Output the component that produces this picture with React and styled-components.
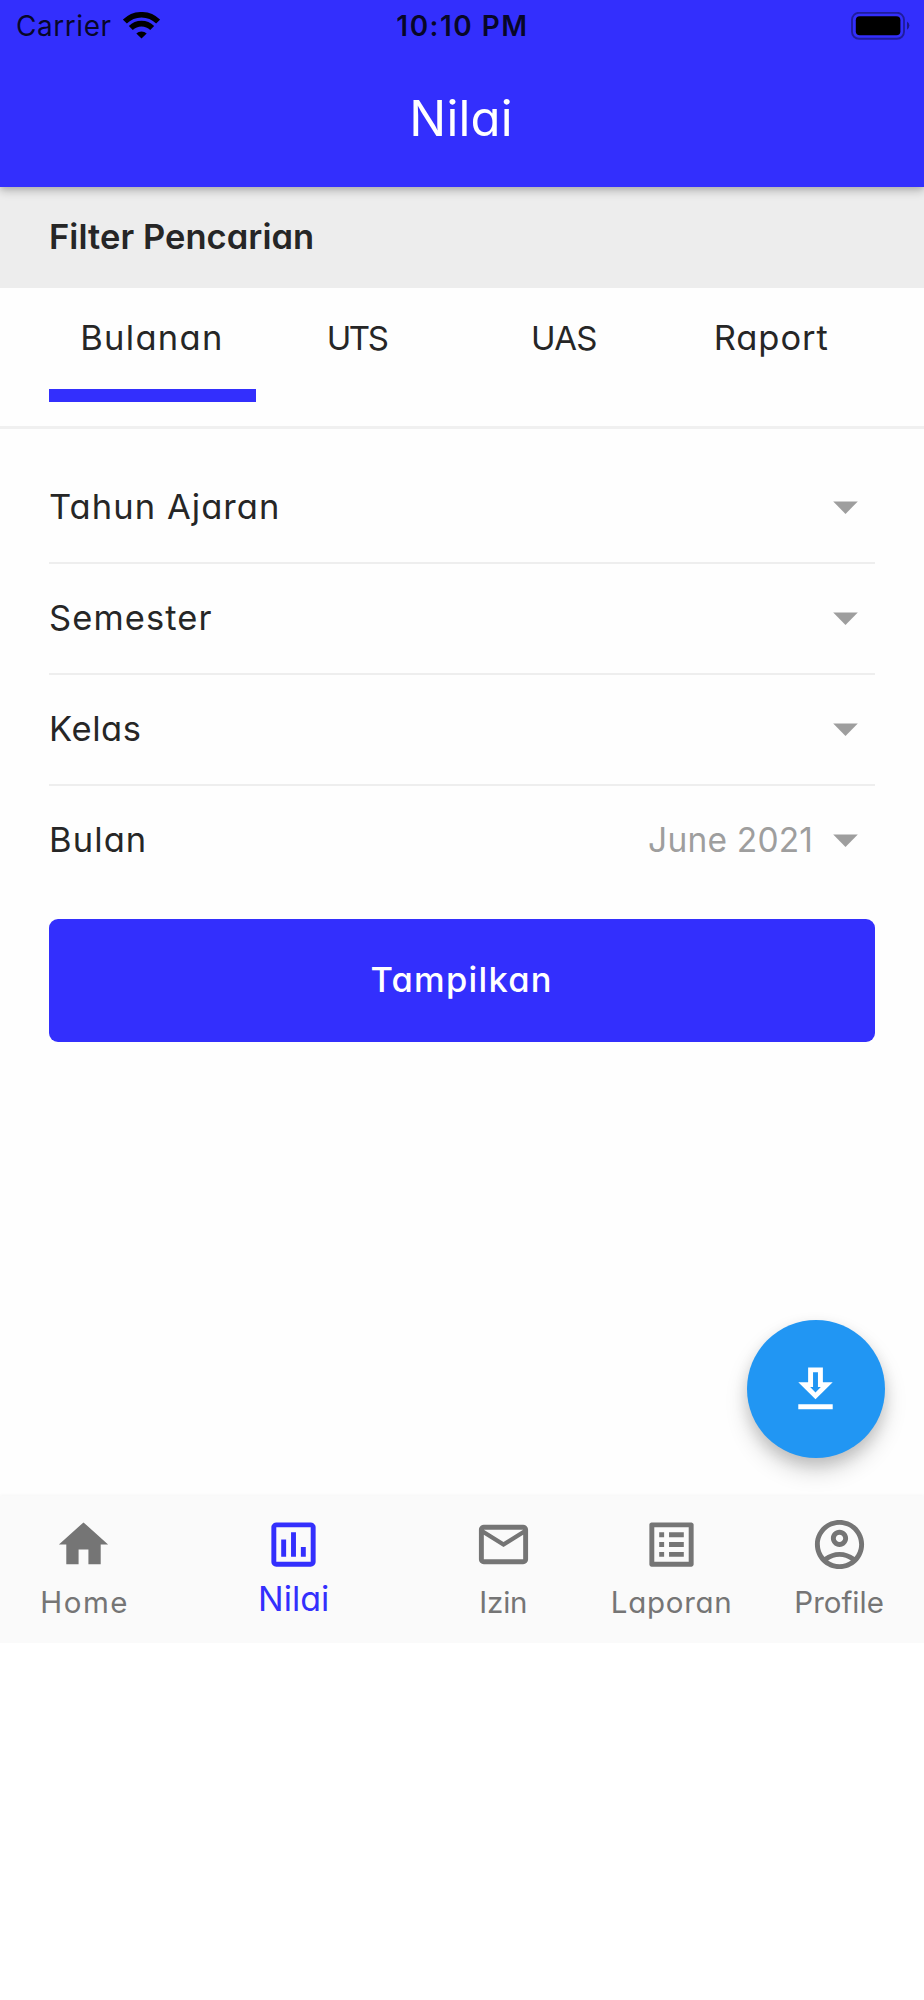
import React from "react";
import styled, { createGlobalStyle } from "styled-components";

const colors = {
  primary: "#332ffd",
  fab: "#2196f3",
  text: "#262626",
  muted: "#9e9e9e",
  inactive: "#757575",
  divider: "#eeeeee",
};

const GlobalStyle = createGlobalStyle`
  *, *::before, *::after { box-sizing: border-box; }
  body {
    margin: 0;
    background: #fff;
    font-family: Inter, "Liberation Sans", sans-serif;
    color: ${colors.text};
  }
  button { font: inherit; color: inherit; border: 0; background: none; padding: 0; }
`;

const Screen = styled.div`
  position: relative;
  display: flex;
  flex-direction: column;
  width: 924px;
  height: 1643px;
  background: #fefefe;
`;

const AppBar = styled.header`
  position: relative;
  z-index: 1;
  flex: none;
  height: 187px;
  background: ${colors.primary};
  box-shadow: 0 4px 9px rgba(0, 0, 0, 0.22), 0 2px 5px rgba(0, 0, 0, 0.08);
`;

const StatusBar = styled.div`
  display: grid;
  grid-template-columns: 1fr auto 1fr;
  align-items: center;
  height: 51px;
  padding: 0 14px 0 16px;
  color: #000;
  font-size: 28px;
  line-height: 34px;
`;

const Carrier = styled.div`
  display: flex;
  align-items: center;
  gap: 11px;
  letter-spacing: 0.56px;
  color: rgba(0, 0, 0, 0.85);
`;

const Clock = styled.div`
  font-weight: 600;
  letter-spacing: 1.48px;
  padding-right: 1px;
  color: rgba(0, 0, 0, 0.85);
`;

const BatterySlot = styled.div`
  display: flex;
  justify-content: flex-end;
`;

/* Letter-spaced text whose trailing space does not shift its centring. */
const Label = styled.span`
  white-space: pre;
  font-feature-settings: "cv11";
  letter-spacing: ${(p) => p.$spacing || 0}px;
  margin-right: ${(p) => -(p.$spacing || 0)}px;
`;

const Title = styled.h1`
  margin: 0;
  display: flex;
  align-items: center;
  justify-content: center;
  height: 135px;
  padding-right: 2px;
  color: #fff;
  font-size: 49px;
  font-weight: 400;
`;

const FilterHeading = styled.h2`
  flex: none;
  display: flex;
  align-items: center;
  height: 101px;
  margin: 0;
  padding: 0 49px 3px;
  background: #ededed;
  font-size: 34.5px;
  font-weight: 600;
`;

const Tabs = styled.nav`
  flex: none;
  display: flex;
  height: 141px;
  padding: 0 49px;
  border-bottom: 3px solid #f0f0f0;
`;

const Tab = styled.button`
  flex: 1;
  display: flex;
  flex-direction: column;
  font-size: ${(p) => (p.$caps ? 33 : 34.5)}px;
`;

const TabLabel = styled.span`
  display: flex;
  align-items: center;
  justify-content: center;
  width: 100%;
  height: 101px;
  padding: 0 2px 2px 0;
`;

const TabIndicator = styled.span`
  width: 100%;
  height: 12.5px;
  background: ${(p) => (p.$active ? colors.primary : "transparent")};
`;

const Form = styled.form`
  flex: 1;
  padding: 24px 49px 0;
`;

const Field = styled.div`
  display: flex;
  align-items: center;
  height: 111px;
  padding: 0 0 2px;
  border-bottom: 2px solid ${(p) => (p.$last ? "transparent" : colors.divider)};
  font-size: 34.5px;
`;

const FieldValue = styled.span`
  margin-left: auto;
  margin-right: 3px;
  color: ${colors.muted};
  font-size: 33.5px;
`;

const SubmitButton = styled.button`
  display: flex;
  align-items: center;
  justify-content: center;
  width: 100%;
  height: 123px;
  margin-top: 22px;
  padding: 0 2px 2px 0;
  border-radius: 9px;
  background: ${colors.primary};
  color: #fff;
  font-size: 34.5px;
  font-weight: 500;
`;

const Fab = styled.button`
  position: absolute;
  right: 39.5px;
  bottom: 185px;
  display: flex;
  align-items: center;
  justify-content: center;
  width: 138px;
  height: 138px;
  border-radius: 50%;
  background: ${colors.fab};
  color: #fff;
  box-shadow: 0 13px 22px rgba(0, 0, 0, 0.17), 0 6px 14px rgba(0, 0, 0, 0.12);
`;

const BottomNav = styled.nav`
  flex: none;
  display: flex;
  height: 147px;
  padding-right: 1px;
  background: #fafafa;
  box-shadow: 0 -1px 3px rgba(0, 0, 0, 0.035);
`;

const NavItem = styled.button`
  flex: ${(p) => (p.$active ? 1.5 : 1)};
  display: flex;
  flex-direction: column;
  align-items: center;
  gap: ${(p) => (p.$active ? 7 : 10)}px;
  padding-top: 19px;
  color: ${(p) => (p.$active ? colors.primary : colors.inactive)};
  font-size: ${(p) => (p.$active ? 34 : 29.5)}px;
  line-height: 36px;
`;

const Glyph = ({ d, size = 59, color = "currentColor" }) => (
  <svg width={size} height={size} viewBox="0 0 24 24" fill={color} aria-hidden="true">
    <path d={d} />
  </svg>
);

const icons = {
  dropdown: "M7 10l5 5 5-5z",
  download: "M19 9h-4V3H9v6H5l7 7 7-7zm-8 2V5h2v6h1.17L12 13.17 9.83 11H11zm-6 7h14v2H5z",
  home: "M10 20v-6h4v6h5v-8h3L12 3 2 12h3v8z",
  chart:
    "M9 17H7v-7h2v7zm4 0h-2V7h2v10zm4 0h-2v-4h2v4zm2 2H5V5h14v14zm0-16H5c-1.1 0-2 .9-2 2v14c0 1.1.9 2 2 2h14c1.1 0 2-.9 2-2V5c0-1.1-.9-2-2-2z",
  mail:
    "M22 6c0-1.1-.9-2-2-2H4c-1.1 0-2 .9-2 2v12c0 1.1.9 2 2 2h16c1.1 0 2-.9 2-2V6zm-2 0l-8 5-8-5h16zm0 12H4V8l8 5 8-5v10z",
  list:
    "M19 5v14H5V5h14m1.1-2H3.9c-.5 0-.9.4-.9.9v16.2c0 .4.4.9.9.9h16.2c.4 0 .9-.5.9-.9V3.9c0-.5-.5-.9-.9-.9zM11 7h6v2h-6V7zm0 4h6v2h-6v-2zm0 4h6v2h-6v-2zM7 7h2v2H7V7zm0 4h2v2H7v-2zm0 4h2v2H7v-2z",
  profile:
    "M12 2C6.48 2 2 6.48 2 12s4.48 10 10 10 10-4.48 10-10S17.52 2 12 2zM7.35 18.5C8.66 17.56 10.26 17 12 17s3.34.56 4.65 1.5C15.34 19.44 13.74 20 12 20s-3.34-.56-4.65-1.5zm10.79-1.38C16.45 15.8 14.32 15 12 15s-4.45.8-6.14 2.12C4.7 15.73 4 13.95 4 12c0-4.42 3.58-8 8-8s8 3.58 8 8c0 1.95-.7 3.73-1.86 5.12zM12 6c-1.93 0-3.5 1.57-3.5 3.5S10.07 13 12 13s3.5-1.57 3.5-3.5S13.93 6 12 6zm0 5c-.83 0-1.5-.67-1.5-1.5S11.17 8 12 8s1.5.67 1.5 1.5S12.83 11 12 11z",
};

const WifiIcon = () => (
  <svg width="37" height="27" viewBox="0 0 37 27" aria-hidden="true">
    <g fill="none" stroke="#000" strokeWidth="5.6">
      <path d="M1.9 9.6a23.6 23.6 0 0 1 33.2 0" />
      <path d="M7.8 16a15.2 15.2 0 0 1 21.4 0" />
    </g>
    <path d="M18.5 26.6l-5.2-5.1a7.6 7.6 0 0 1 10.4 0z" fill="#000" />
  </svg>
);

const BatteryIcon = () => (
  <svg width="59" height="28" viewBox="0 0 59 28" aria-hidden="true">
    <rect x="1" y="0.8" width="52" height="26" rx="7" fill="none" stroke="#000" strokeOpacity="0.38" strokeWidth="1.9" />
    <rect x="4.8" y="4.2" width="44.6" height="19" rx="4" fill="#000" />
    <path d="M56 9.4q2.4 1.5 2.4 4.2t-2.4 4.2z" fill="#000" fillOpacity="0.45" />
  </svg>
);

const tabs = [
  { label: "Bulanan", spacing: 1.3, active: true },
  { label: "UTS", spacing: -2.4, caps: true },
  { label: "UAS", spacing: -0.7, caps: true },
  { label: "Raport", spacing: 0.95 },
];

const fields = [
  { label: "Tahun Ajaran", spacing: 1.05 },
  { label: "Semester", spacing: 1.1 },
  { label: "Kelas", spacing: 0.6 },
  { label: "Bulan", spacing: 1.1, value: "June 2021" },
];

const navItems = [
  { label: "Home", icon: icons.home, spacing: 1.5 },
  { label: "Nilai", icon: icons.chart, spacing: 0, active: true },
  { label: "Izin", icon: icons.mail, spacing: -0.2 },
  { label: "Laporan", icon: icons.list, spacing: 0.7 },
  { label: "Profile", icon: icons.profile, spacing: 0 },
];

export default function App() {
  return (
    <>
      <GlobalStyle />
      <Screen>
        <AppBar>
          <StatusBar>
            <Carrier>
              Carrier
              <WifiIcon />
            </Carrier>
            <Clock>10:10 PM</Clock>
            <BatterySlot>
              <BatteryIcon />
            </BatterySlot>
          </StatusBar>
          <Title>
            <Label $spacing={0.2}>Nilai</Label>
          </Title>
        </AppBar>

        <FilterHeading>
          <Label $spacing={0.06}>Filter Pencarian</Label>
        </FilterHeading>

        <Tabs>
          {tabs.map((tab) => (
            <Tab key={tab.label} type="button" $caps={tab.caps}>
              <TabLabel>
                <Label $spacing={tab.spacing}>{tab.label}</Label>
              </TabLabel>
              <TabIndicator $active={tab.active} />
            </Tab>
          ))}
        </Tabs>

        <Form>
          {fields.map((field, i) => (
            <Field key={field.label} $last={i === fields.length - 1}>
              <Label $spacing={field.spacing}>{field.label}</Label>
              <FieldValue>
                {field.value && <Label $spacing={0.2}>{field.value}</Label>}
              </FieldValue>
              <Glyph d={icons.dropdown} color={colors.muted} />
            </Field>
          ))}
          <SubmitButton type="button">
            <Label $spacing={1.25}>Tampilkan</Label>
          </SubmitButton>
        </Form>

        <BottomNav>
          {navItems.map((item) => (
            <NavItem key={item.label} type="button" $active={item.active}>
              <Glyph d={item.icon} />
              <Label $spacing={item.spacing}>{item.label}</Label>
            </NavItem>
          ))}
        </BottomNav>

        <Fab type="button" aria-label="Download">
          <Glyph d={icons.download} />
        </Fab>
      </Screen>
    </>
  );
}
